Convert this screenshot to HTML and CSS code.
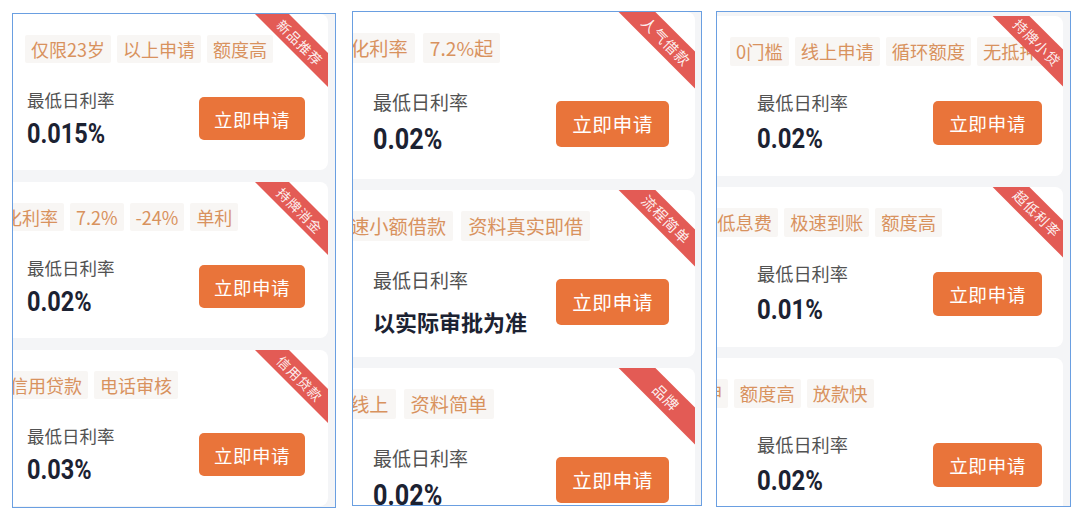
FILE: index.html
```html
<!DOCTYPE html>
<html lang="zh-CN">
<head>
<meta charset="utf-8">
<title>贷款产品列表</title>
<link rel="stylesheet" href="styles.css">
</head>
<body>
<div class="board">
  <section class="panel panel--a">
    <div class="list">
      <article class="card">
        <div class="ribbon">新品推荐</div>
        <div class="tags shift-2">
          <span class="tag">仅限23岁</span><span class="tag">以上申请</span><span class="tag">额度高</span>
        </div>
        <div class="body">
          <div class="info"><div class="label">最低日利率</div><div class="rate">0.015%</div></div>
          <button class="apply">立即申请</button>
        </div>
      </article>
      <article class="card">
        <div class="ribbon">持牌消金</div>
        <div class="tags shift-47">
          <span class="tag">年化利率</span><span class="tag">7.2%</span><span class="tag">-24%</span><span class="tag">单利</span>
        </div>
        <div class="body">
          <div class="info"><div class="label">最低日利率</div><div class="rate">0.02%</div></div>
          <button class="apply">立即申请</button>
        </div>
      </article>
      <article class="card">
        <div class="ribbon">信用贷款</div>
        <div class="tags shift-23">
          <span class="tag">信用贷款</span><span class="tag">电话审核</span>
        </div>
        <div class="body">
          <div class="info"><div class="label">最低日利率</div><div class="rate">0.03%</div></div>
          <button class="apply">立即申请</button>
        </div>
      </article>
    </div>
  </section>

  <section class="panel panel--b">
    <div class="list">
      <article class="card">
        <div class="ribbon">人气借款</div>
        <div class="tags shift-49">
          <span class="tag">年化利率</span><span class="tag">7.2%起</span>
        </div>
        <div class="body">
          <div class="info"><div class="label">最低日利率</div><div class="rate">0.02%</div></div>
          <button class="apply">立即申请</button>
        </div>
      </article>
      <article class="card">
        <div class="ribbon">流程简单</div>
        <div class="tags shift-49">
          <span class="tag">极速小额借款</span><span class="tag">资料真实即借</span>
        </div>
        <div class="body">
          <div class="info"><div class="label">最低日利率</div><div class="rate rate--text">以实际审批为准</div></div>
          <button class="apply">立即申请</button>
        </div>
      </article>
      <article class="card">
        <div class="ribbon">品牌</div>
        <div class="tags shift-49">
          <span class="tag">纯线上</span><span class="tag">资料简单</span>
        </div>
        <div class="body">
          <div class="info"><div class="label">最低日利率</div><div class="rate">0.02%</div></div>
          <button class="apply">立即申请</button>
        </div>
      </article>
    </div>
  </section>

  <section class="panel panel--c">
    <div class="list">
      <article class="card">
        <div class="ribbon">持牌小贷</div>
        <div class="tags shift-27">
          <span class="tag">0门槛</span><span class="tag">线上申请</span><span class="tag">循环额度</span><span class="tag">无抵押</span>
        </div>
        <div class="body">
          <div class="info"><div class="label">最低日利率</div><div class="rate">0.02%</div></div>
          <button class="apply">立即申请</button>
        </div>
      </article>
      <article class="card">
        <div class="ribbon">超低利率</div>
        <div class="tags shift-64">
          <span class="tag">超低息费</span><span class="tag">极速到账</span><span class="tag">额度高</span>
        </div>
        <div class="body">
          <div class="info"><div class="label">最低日利率</div><div class="rate">0.01%</div></div>
          <button class="apply">立即申请</button>
        </div>
      </article>
      <article class="card">
        <div class="tags shift-96">
          <span class="tag">无抵押</span><span class="tag">额度高</span><span class="tag">放款快</span>
        </div>
        <div class="body">
          <div class="info"><div class="label">最低日利率</div><div class="rate">0.02%</div></div>
          <button class="apply">立即申请</button>
        </div>
      </article>
    </div>
  </section>
</div>
</body>
</html>
```

FILE: styles.css
```css
* { box-sizing: border-box; }

body {
  margin: 0;
  background: #ffffff;
  font-family: "Noto Sans CJK SC", "Noto Sans", sans-serif;
}

.board {
  display: flex;
  align-items: flex-start;
  padding: 11px 0 0 12px;
}

.panel {
  border: 1px solid #6a9fe1;
  overflow: hidden;
  background: #f4f5f7;
  flex: none;
}

.panel--a {
  width: 324px;
  height: 495px;
  margin-top: 2px;
  --gap: 12px; --pt: 0px; --lr: 7px;
  --ch: 156px; --pl: 14px; --pr: 23px; --tt: 21px;
  --th: 28px; --tf: 18px; --tp: 6px; --tg: 6px;
  --bm: 24.5px; --lf: 17.5px; --lh: 24px;
  --rf: 28px; --rlh: 32px; --rg: 6px;
  --bw: 106px; --bh: 43px; --bt: 9.5px; --bf: 18.5px;
  --rh: 24px; --rr: -32.4px; --rt: 15.6px; --rfz: 13.5px;
}

.panel--b {
  width: 350px;
  height: 495px;
  margin-left: 16px;
  --gap: 11px; --pt: 0px; --lr: 6px;
  --ch: 167px; --pl: 20px; --pr: 26px; --tt: 21px;
  --th: 30px; --tf: 19.2px; --tp: 7px; --tg: 8px;
  --bm: 25.5px; --lf: 19px; --lh: 26px;
  --rf: 30px; --rlh: 34px; --rg: 7.5px;
  --bw: 113px; --bh: 46px; --bt: 12px; --bf: 19.7px;
  --rh: 26px; --rr: -30.7px; --rt: 16.3px; --rfz: 14.5px;
}

.panel--c {
  width: 355px;
  height: 496px;
  margin-left: 14px;
  --gap: 11px; --pt: 4px; --lr: 7px;
  --ch: 160px; --pl: 40px; --pr: 21px; --tt: 21px;
  --th: 29px; --tf: 18.3px; --tp: 6px; --tg: 6px;
  --bm: 24px; --lf: 18.2px; --lh: 25px;
  --rf: 28.5px; --rlh: 32px; --rg: 8px;
  --bw: 109px; --bh: 44px; --bt: 10.5px; --bf: 18.7px;
  --rh: 26px; --rr: -34.3px; --rt: 12.7px; --rfz: 14px;
}

.list {
  display: flex;
  flex-direction: column;
  gap: var(--gap);
  padding: var(--pt) var(--lr) 0 0;
}

.card {
  position: relative;
  overflow: hidden;
  flex: none;
  height: var(--ch);
  background: #ffffff;
  border-radius: 0 8px 8px 0;
  padding: var(--tt) var(--pr) 0 var(--pl);
}

.tags {
  display: flex;
  gap: var(--tg);
  white-space: nowrap;
}

.shift-2 { margin-left: -2px; }
.shift-23 { margin-left: -23px; }
.shift-27 { margin-left: -27px; }
.shift-47 { margin-left: -47px; }
.shift-49 { margin-left: -49px; }
.shift-64 { margin-left: -64px; }
.shift-96 { margin-left: -96px; }

.tag {
  flex: none;
  height: var(--th);
  line-height: var(--th);
  padding: 0 var(--tp);
  font-size: var(--tf);
  color: #d8925e;
  background: #f8f6f4;
  border-radius: 2px;
}

.body {
  display: flex;
  justify-content: space-between;
  align-items: flex-start;
  margin-top: var(--bm);
}

.label {
  font-size: var(--lf);
  line-height: var(--lh);
  color: #525252;
}

.rate {
  margin-top: var(--rg);
  font-family: "Roboto", "Liberation Sans", sans-serif;
  font-weight: 700;
  font-size: var(--rf);
  line-height: var(--rlh);
  color: #1c2232;
  white-space: nowrap;
  transform: scaleX(0.84);
  transform-origin: left center;
}

.rate--text {
  margin-top: 11px;
  font-family: "Noto Sans CJK SC", sans-serif;
  font-size: 22px;
  transform: none;
}

.apply {
  flex: none;
  width: var(--bw);
  height: var(--bh);
  margin-top: var(--bt);
  padding: 0;
  border: 0;
  border-radius: 5px;
  background: #e9743a;
  color: #ffffff;
  font-family: "Noto Sans CJK SC", sans-serif;
  font-size: var(--bf);
  letter-spacing: 0.5px;
}

.ribbon {
  position: absolute;
  top: var(--rt);
  right: var(--rr);
  width: 120px;
  height: var(--rh);
  line-height: var(--rh);
  transform: rotate(45deg);
  background: #e35b55;
  color: rgba(255, 255, 255, 0.92);
  font-size: var(--rfz);
  text-align: center;
  letter-spacing: 1px;
  padding-left: 1px;
}
```
